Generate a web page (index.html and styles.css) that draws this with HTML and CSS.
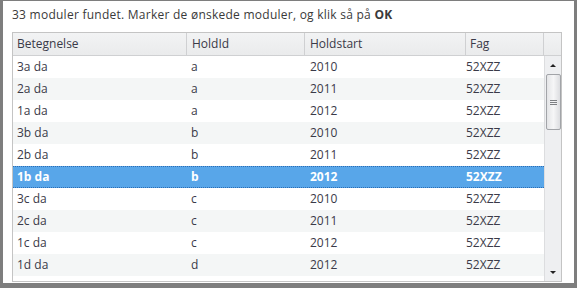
FILE: index.html
```html
<!DOCTYPE html>
<html>
<head>
<meta charset="utf-8">
<link rel="stylesheet" href="styles.css">
</head>
<body>
<div class="dialog">
  <p class="intro">33 moduler fundet. Marker de ønskede moduler, og klik så på <b>OK</b></p>
  <div class="grid">
    <div class="head">
      <div class="hc c1">Betegnelse</div>
      <div class="hc c2">HoldId</div>
      <div class="hc c3">Holdstart</div>
      <div class="hc c4">Fag</div>
      <div class="hc c5"></div>
    </div>
    <div class="bodywrap">
      <div class="rows">
        <div class="row"><span>3a da</span><span>a</span><span>2010</span><span>52XZZ</span></div>
        <div class="row alt"><span>2a da</span><span>a</span><span>2011</span><span>52XZZ</span></div>
        <div class="row"><span>1a da</span><span>a</span><span>2012</span><span>52XZZ</span></div>
        <div class="row alt"><span>3b da</span><span>b</span><span>2010</span><span>52XZZ</span></div>
        <div class="row"><span>2b da</span><span>b</span><span>2011</span><span>52XZZ</span></div>
        <div class="row sel"><span>1b da</span><span>b</span><span>2012</span><span>52XZZ</span></div>
        <div class="row"><span>3c da</span><span>c</span><span>2010</span><span>52XZZ</span></div>
        <div class="row alt"><span>2c da</span><span>c</span><span>2011</span><span>52XZZ</span></div>
        <div class="row"><span>1c da</span><span>c</span><span>2012</span><span>52XZZ</span></div>
        <div class="row alt"><span>1d da</span><span>d</span><span>2012</span><span>52XZZ</span></div>
      </div>
      <div class="scroll">
        <div class="arrow up"></div>
        <div class="thumb"><i></i><i></i><i></i></div>
        <div class="spacer"></div>
        <div class="arrow down"></div>
      </div>
    </div>
  </div>
</div>
</body>
</html>
```
FILE: styles.css
```css
html, body { margin: 0; padding: 0; background: #fff; }
body { width: 577px; height: 288px; overflow: hidden; }
.dialog {
  box-sizing: border-box;
  width: 577px; height: 288px;
  border-style: solid;
  border-color: #7e7e7e;
  border-width: 1px 3px 5px 3px;
  padding: 0 12px 0 9px;
  font-family: "Open Sans", "DejaVu Sans", sans-serif;
  color: #3a3a48;
}
.intro {
  margin: 0;
  height: 31px;
  line-height: 27px;
  font-size: 12px;
  letter-spacing: 0.25px;
  color: #3a3a3a;
  white-space: nowrap;
}
.intro b { font-weight: 700; }
.grid {
  width: 550px; height: 250px;
  box-sizing: border-box;
  border: 1px solid #c4c4c4;
  display: flex; flex-direction: column;
}
.head {
  display: flex;
  height: 22px;
  border-bottom: 1px solid #cfd0d2;
  background: linear-gradient(#f2f3f4, #eaebec);
  font-size: 12px;
  line-height: 22px;
}
.hc { box-sizing: border-box; border-right: 1px solid #cfd0d2; padding-left: 4px; white-space: nowrap; }
.c1 { width: 174px; }
.c2 { width: 118px; padding-left: 5px; }
.c3 { width: 161px; padding-left: 5px; }
.c4 { width: 78px; padding-left: 4px; }
.c5 { flex: 1; border-right: 0; }
.bodywrap { flex: 1; display: flex; min-height: 0; }
.rows { flex: 1; }
.row {
  display: grid;
  grid-template-columns: 174px 119px 156px 1fr;
  height: 22px;
  box-sizing: border-box;
  font-size: 12px;
  line-height: 22px;
  background: #fff;
}
.row span { padding-left: 4px; white-space: nowrap; }
.row.alt { background: #f4f6f6; }
.row.sel {
  background: #58a6e9;
  color: #fff;
  font-weight: 700;
  border-top: 1px dotted #2c6db4;
  border-bottom: 1px dotted #2c6db4;
  line-height: 20px;
}
.scroll {
  width: 17px;
  box-sizing: border-box;
  border-left: 1px solid #dcdddf;
  background: #eeeff1;
  display: flex; flex-direction: column; align-items: center;
}
.arrow { width: 0; height: 0; border-left: 3px solid transparent; border-right: 3px solid transparent; }
.arrow.up { border-bottom: 3px solid #222; margin-top: 8px; }
.arrow.down { border-top: 3px solid #222; margin-bottom: 7px; }
.thumb {
  margin-top: 7px;
  width: 15px; height: 56px;
  box-sizing: border-box;
  border: 1px solid #a2a4a8;
  border-radius: 2px;
  background: linear-gradient(90deg, #e4e5e7, #f6f6f7 50%, #dcdde0);
  display: flex; flex-direction: column; align-items: center; justify-content: center; gap: 1px;
}
.thumb i { display: block; width: 7px; height: 1px; background: #7d7f83; }
.spacer { flex: 1; }
```
